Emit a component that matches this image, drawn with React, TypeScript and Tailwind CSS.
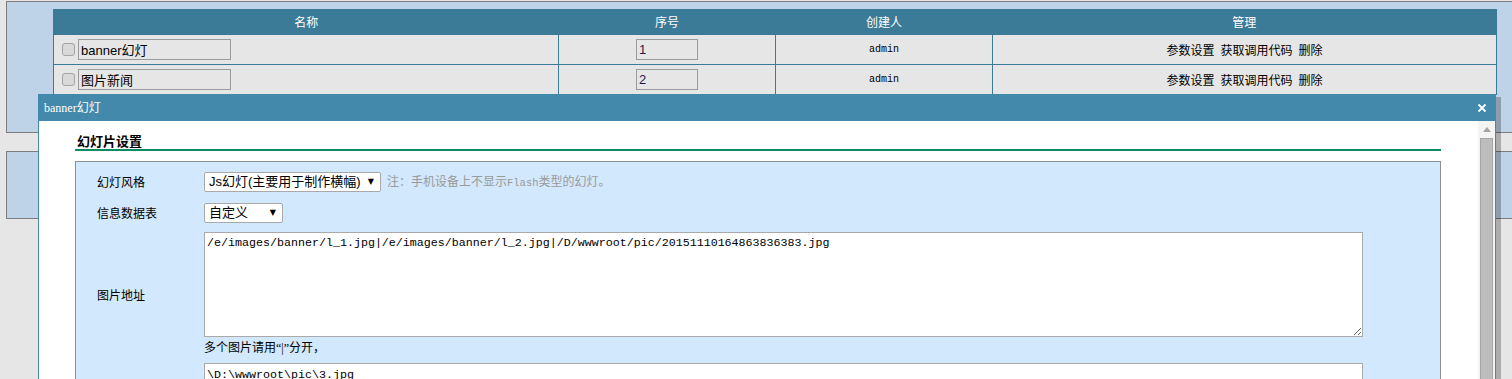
const rows = [
  { name: 'banner幻灯', order: '1' },
  { name: '图片新闻', order: '2' },
]

function FakeSelect({ text, width }: { text: string; width: string }) {
  return (
    <div
      className={`flex h-[20px] ${width} items-center justify-between rounded-[2px] border border-[#a9a9a9] bg-white pl-[4px] pr-[6px] font-['Liberation_Sans','Noto_Sans_CJK_SC',sans-serif] text-[13px] leading-[18px]`}
    >
      <span>{text}</span>
      <span className="font-['DejaVu_Sans',sans-serif] text-[8px]">▼</span>
    </div>
  )
}

export default function App() {
  return (
    <div className="relative h-[379px] w-[1512px] overflow-hidden bg-[#e6e6e6] pt-[1px] font-['Noto_Sans_CJK_SC',sans-serif] text-[12px] text-black">
      {/* list panel behind the dialog */}
      <div className="ml-[6px] h-[132px] border-y border-l border-[#7d7d7d] bg-[#bed3e7] pl-[46px] pt-[7px]">
        <table className="w-[1444px] table-fixed border-collapse border border-[#3b7b98]">
          <thead>
            <tr className="h-[25px] bg-[#3b7b98] text-white">
              <th className="w-[505px] font-normal">名称</th>
              <th className="w-[217px] font-normal">序号</th>
              <th className="w-[217px] font-normal">创建人</th>
              <th className="font-normal">管理</th>
            </tr>
          </thead>
          <tbody>
            {rows.map((r) => (
              <tr key={r.order} className="h-[30px] bg-[#e6e6e6]">
                <td className="border border-[#3b7b98] p-0">
                  <div className="flex items-center pl-[8px]">
                    <span className="mr-[3px] inline-block h-[13px] w-[13px] rounded-[3px] border border-[#a3a3a3] bg-[#d9d9d9]" />
                    <input
                      readOnly
                      defaultValue={r.name}
                      className="h-[21px] w-[153px] border border-[#9b9b9b] bg-[#e6e6e6] px-[2px] font-['Liberation_Sans','Noto_Sans_CJK_SC',sans-serif] text-[13px] outline-none"
                    />
                  </div>
                </td>
                <td className="border border-[#3b7b98] p-0 text-center">
                  <input
                    readOnly
                    defaultValue={r.order}
                    className="h-[21px] w-[62px] border border-[#9b9b9b] bg-[#e6e6e6] px-[2px] font-['Liberation_Sans',sans-serif] text-[13px] text-[#1e1a4a] outline-none"
                  />
                </td>
                <td className="border border-[#3b7b98] p-0 text-center font-['Liberation_Mono',monospace] text-[10px]">
                  admin
                </td>
                <td className="border border-[#3b7b98] p-0">
                  <div className="flex justify-center gap-[6px]">
                    <span>参数设置</span>
                    <span>获取调用代码</span>
                    <span>删除</span>
                  </div>
                </td>
              </tr>
            ))}
          </tbody>
        </table>
      </div>
      <div className="ml-[6px] mt-[18px] h-[68px] border-y border-l border-[#7d7d7d] bg-[#bed3e7]" />

      {/* dialog */}
      <div className="absolute left-[38px] top-[94px] h-[320px] w-[1458px] border-x border-[#4389ab] bg-white shadow-[5px_3px_0_rgba(0,0,0,0.25)]">
        <div className="flex h-[27px] items-center justify-between bg-[#4389ab] pl-[5px] pr-[8px] font-['Liberation_Serif','Noto_Sans_CJK_SC',serif] text-[12px] text-white">
          <span>banner幻灯</span>
          <svg width="10" height="10" viewBox="0 0 10 10">
            <path d="M1.5 1.5L8.5 8.5M8.5 1.5L1.5 8.5" stroke="#fff" strokeWidth="1.8" />
          </svg>
        </div>
        <div className="flex h-[293px]">
          <div className="flex-1 pl-[36px] pr-[37px]">
            <div className="mt-[11px] border-b-2 border-[#0e8b64] pl-[2px] text-[13px] font-bold leading-[17px]">
              幻灯片设置
            </div>
            <div className="mt-[10px] border border-[#8f8f8f] bg-[#d2e8fc] pb-[20px] pt-[10px]">
              <div className="flex h-[20px] items-center">
                <div className="w-[128px] pl-[21px]">幻灯风格</div>
                <FakeSelect text="Js幻灯(主要用于制作横幅)" width="w-[177px]" />
                <span className="ml-[6px] text-[#9a9a9a]">
                  注：手机设备上不显示
                  <span className="font-['Liberation_Mono',monospace] text-[10.5px]">Flash</span>
                  类型的幻灯。
                </span>
              </div>
              <div className="mt-[11px] flex h-[20px] items-center">
                <div className="w-[128px] pl-[21px]">信息数据表</div>
                <FakeSelect text="自定义" width="w-[79px]" />
              </div>
              <div className="mt-[9px] flex items-center">
                <div className="w-[128px] pl-[21px]">图片地址</div>
                <div>
                  <textarea
                    readOnly
                    defaultValue="/e/images/banner/l_1.jpg|/e/images/banner/l_2.jpg|/D/wwwroot/pic/20151110164863836383.jpg"
                    className="block h-[105px] w-[1159px] border border-[#a9a9a9] bg-white px-[2px] pt-[3px] font-['Liberation_Mono',monospace] text-[11.67px] leading-[14px] outline-none"
                  />
                  <div className="mt-[1px] leading-[18px]">
                    多个图片请用<span className="font-['Liberation_Serif',serif]">“|”</span>分开，
                  </div>
                </div>
              </div>
              <div className="mt-[6px] flex items-center">
                <div className="w-[128px] pl-[21px]" />
                <textarea
                  readOnly
                  defaultValue={'\\D:\\wwwroot\\pic\\3.jpg'}
                  className="block h-[60px] w-[1159px] border border-[#a9a9a9] bg-white px-[2px] pt-[4px] font-['Liberation_Mono',monospace] text-[11.67px] leading-[14px] outline-none"
                />
              </div>
            </div>
          </div>
          {/* scrollbar */}
          <div className="flex w-[17px] flex-col items-center bg-[#f4f4f4]">
            <div className="flex h-[17px] items-center justify-center">
              <svg width="8" height="5" viewBox="0 0 8 5">
                <path d="M0 5L4 0L8 5Z" fill="#a3a3a3" />
              </svg>
            </div>
            <div className="w-[13px] flex-1 border border-[#a6a6a6] bg-[#bdbdbd]" />
          </div>
        </div>
      </div>
    </div>
  )
}
